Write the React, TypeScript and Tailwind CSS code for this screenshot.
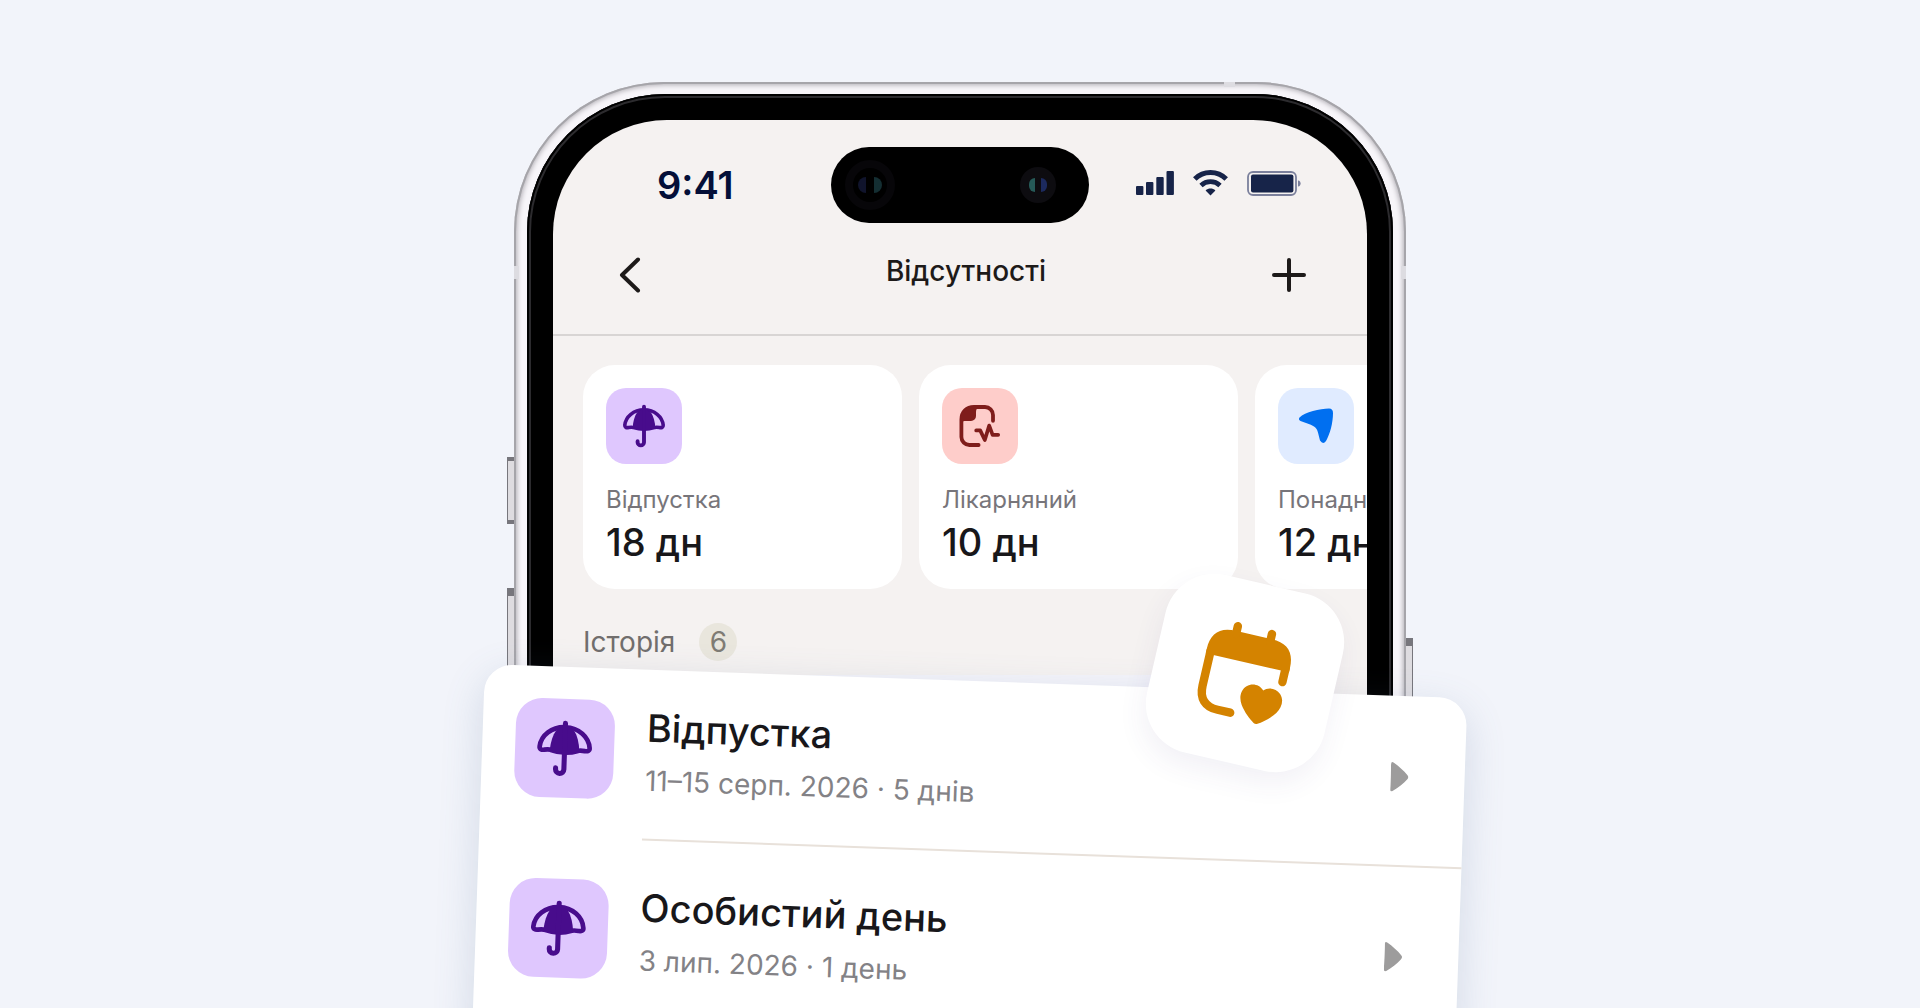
import React from 'react';

interface IconProps {
  className?: string;
}

const UmbrellaIcon: React.FC<IconProps> = ({ className }) => (
  <svg viewBox="0 0 76 76" className={className} fill="none" aria-hidden="true">
    <path
      d="M18.800 37.200C19.600 28.600 27.600 21.800 38 21.800s18.400 6.800 19.200 15.400c.2 2.200-1.600 2.600-3.400 2.400-2-.3-3.800-.6-5.400 0-6.400 2.100-14.400 2.100-20.800 0-1.600-.6-3.400-.3-5.400 0-1.800.2-3.600-.2-3.400-2.400z"
      stroke="#480c8c"
      strokeWidth="3.600"
      strokeLinejoin="round"
    />
    <path
      d="M31 24.500C28.600 28 27.200 33 26.600 39.600c6.500 2.600 16.300 2.600 22.800 0-.6-6.600-2-11.600-4.400-15.100L38 20z"
      fill="#480c8c"
    />
    <path
      d="M38 18.800V54.200a3.200 3.200 0 0 1-6.400 0v-1"
      stroke="#480c8c"
      strokeWidth="3.900"
      strokeLinecap="round"
      strokeLinejoin="round"
    />
  </svg>
);

const SickLeaveIcon: React.FC<IconProps> = ({ className }) => (
  <svg viewBox="0 0 76 76" className={className} fill="none" aria-hidden="true">
    <path
      d="M51 32.800V27a8 8 0 0 0-8-8H32C24.500 19 19.400 24 19.400 31.500V49a8 8 0 0 0 8 8h9.200"
      stroke="#7f1d1b"
      strokeWidth="3.800"
      strokeLinecap="round"
    />
    <path
      d="M18.600 35V31C18.600 23.500 24 18 32 18h6c-3 1.800-4 3.500-4 6v4a5 5 0 0 1-5 5h-5c-2.500 0-4 .6-5.400 2z"
      fill="#7f1d1b"
    />
    <path
      d="M34.200 42.400h4l4.600 9.600 4.400-14.400 3.400 9.200h5.600"
      stroke="#7f1d1b"
      strokeWidth="3.700"
      strokeLinecap="round"
      strokeLinejoin="round"
    />
  </svg>
);

const ArrowIcon: React.FC<IconProps> = ({ className }) => (
  <svg viewBox="0 0 76 76" className={className} aria-hidden="true">
    <path
      d="M21.500 29.500C27 24 42 20.500 51 20.500q4 0 4 4.500c0 10-3 21-7 28q-3 4-6-.5C40 45 40 41 36 38.500 32 36 27 35 22.500 33q-2.500-1.500-1-3.500z"
      fill="#006ff0"
    />
  </svg>
);

const CalendarHeartIcon: React.FC<IconProps> = ({ className }) => (
  <svg viewBox="-50 -50 100 100" className={className} fill="none" aria-hidden="true">
    <path
      d="M-38.500-14v36c0 13 7 20 20 20h13"
      stroke="#d48300"
      strokeWidth="8.400"
      strokeLinecap="round"
    />
    <path d="M38.500-14V.5" stroke="#d48300" strokeWidth="8.400" strokeLinecap="round" />
    <path d="M-42.700-10.500V-15c0-16 8-24 24-24h37.400c16 0 24 8 24 24v4.500z" fill="#d48300" />
    <path d="M-17.500-44v8M17.500-44v8" stroke="#d48300" strokeWidth="8.400" strokeLinecap="round" />
    <path
      d="M21.600 13C17 8 9.500 8 4.500 12.500-1 18 0 26 4 32c4.500 6.500 11 12 15.600 14.700q2 1.200 4 0C28 44 35 38.500 39.500 32c4-6 5-14-.6-19.500C34 8 26 8 21.600 13z"
      fill="#d48300"
    />
  </svg>
);

const SignalIcon = () => (
  <svg width="38" height="24" viewBox="0 0 38 24" fill="#172449" aria-hidden="true">
    <rect x="0" y="15" width="7.400" height="9" rx="1" />
    <rect x="10" y="11" width="7.400" height="13" rx="1" />
    <rect x="20.300" y="6" width="7.400" height="18" rx="1" />
    <rect x="30.500" y="0" width="7.400" height="24" rx="1" />
  </svg>
);

const WifiIcon = () => (
  <svg width="35" height="26" viewBox="0 0 35 26" fill="none" stroke="#172449" aria-hidden="true">
    <path d="M1.800 9C10.500.4 24.500.4 33.200 9" strokeWidth="5" />
    <path d="M8 15.400c5.400-5 13.600-5 19 0" strokeWidth="4.800" />
    <path d="M12.600 20.400c2.800-2.600 7-2.600 9.800 0L17.500 25.600z" fill="#172449" stroke="none" />
  </svg>
);

const BatteryIcon = () => (
  <svg width="54" height="25" viewBox="0 0 54 25" fill="none" aria-hidden="true">
    <rect x="1" y="1" width="48" height="23" rx="5" stroke="#7b809c" strokeWidth="1.800" />
    <rect x="4" y="3.600" width="42.400" height="17.800" rx="2" fill="#172449" />
    <path d="M51 9.500c3.500 0 3.500 6 0 6z" fill="#7b809c" />
  </svg>
);

interface Balance {
  label: string;
  value: string;
  tile: string;
  Icon: React.FC<IconProps>;
}

const balances: Balance[] = [
  { label: 'Відпустка', value: '18 дн', tile: 'bg-[#dfc7fe]', Icon: UmbrellaIcon },
  { label: 'Лікарняний', value: '10 дн', tile: 'bg-[#fecdca]', Icon: SickLeaveIcon },
  { label: 'Понаднормові', value: '12 дн', tile: 'bg-[#e0ebff]', Icon: ArrowIcon },
];

const history = [
  { title: 'Відпустка', details: '11–15 серп. 2026 · 5 днів' },
  { title: 'Особистий день', details: '3 лип. 2026 · 1 день' },
];

const StatusBar = () => (
  <div className="grid h-[76px] grid-cols-[1fr_258px_1fr] items-center">
    <span className="pl-[104px] text-[38px] leading-[48px] font-semibold text-[#040f38]">9:41</span>
    <div className="flex h-full items-center justify-between rounded-full bg-black pr-[33px] pl-[14px]">
      <span className="flex size-[50px] items-center justify-center gap-2 rounded-full border-8 border-[#070609]">
        <span className="h-4 w-2 rounded-l-full bg-[#10142c]" />
        <span className="h-4 w-2 rounded-r-full bg-[#142e32]" />
      </span>
      <span className="flex size-9 items-center justify-center gap-1.5 rounded-full bg-[#0d0c10]">
        <span className="h-3.5 w-1.5 rounded-l-full bg-[#265a58]" />
        <span className="h-3.5 w-1.5 rounded-r-full bg-[#1c2a5e]" />
      </span>
    </div>
    <div className="flex items-center justify-end gap-[19px] pr-[66px] pb-1">
      <SignalIcon />
      <WifiIcon />
      <BatteryIcon />
    </div>
  </div>
);

const ScreenHeader = () => (
  <header className="flex h-[113px] items-center justify-between border-b-2 border-[#d8d5d4] pr-[61px] pb-2 pl-[59px]">
    <button type="button" aria-label="Назад" className="flex h-12 w-12 items-center pl-[7px]">
      <svg width="22" height="36" viewBox="0 0 22 36" fill="none" aria-hidden="true">
        <path
          d="M19 2.500L3 18l16 15.500"
          stroke="#1d1a19"
          strokeWidth="4"
          strokeLinecap="round"
          strokeLinejoin="round"
        />
      </svg>
    </button>
    <h1 className="pb-2 text-[28px] leading-9 font-medium text-[#1d1a19]">Відсутності</h1>
    <button type="button" aria-label="Додати">
      <svg width="34" height="34" viewBox="0 0 34 34" fill="none" aria-hidden="true">
        <path d="M17 2v30M2 17h30" stroke="#1d1a19" strokeWidth="4" strokeLinecap="round" />
      </svg>
    </button>
  </header>
);

const BalanceCard: React.FC<Balance> = ({ label, value, tile, Icon }) => (
  <article className="w-[319px] shrink-0 rounded-[32px] bg-white p-[23px]">
    <div className={`size-[76px] rounded-[20px] ${tile}`}>
      <Icon className="size-full" />
    </div>
    <p className="mt-[22px] text-2xl leading-7 text-[#77757a]">{label}</p>
    <p className="mt-1 text-[38px] leading-[48px] font-medium text-[#18171a]">{value}</p>
  </article>
);

const HistoryCard = () => (
  <ul className="absolute top-[582px] -left-[29px] h-[480px] w-[983px] origin-top-left rotate-2 rounded-[28px] bg-white pt-8 pl-[33px] shadow-[0_12px_40px_rgba(80,110,150,0.2)]">
    {history.map((item, i) => (
      <li key={item.title} className={i > 0 ? 'flex items-start gap-[31px] pt-[41px]' : 'flex items-start gap-[31px]'}>
        <div className="size-[99px] shrink-0 rounded-[26px] bg-[#dfc7fe]">
          <UmbrellaIcon className="size-full" />
        </div>
        <div
          className={
            i < history.length - 1
              ? 'flex h-[139px] flex-1 items-start justify-between border-b-2 border-[#e8e1da] pr-14'
              : 'flex h-[139px] flex-1 items-start justify-between pr-14'
          }
        >
          <div className="pt-[2px] pl-px">
            <h2 className="text-[38px] leading-[48px] font-medium text-[#18171a]">{item.title}</h2>
            <p className="mt-[11px] text-[28px] leading-9 text-[#838286]">{item.details}</p>
          </div>
          <button type="button" aria-label="Докладніше" className="flex h-[98px] items-center">
            <svg width="18" height="30" viewBox="0 0 18 30" aria-hidden="true">
              <path d="M0 2.500Q0-.8 2.800 1C8 4.500 13 8.500 16.800 13q1.800 2 0 4C13 21.500 8 25.500 2.800 29Q0 30.800 0 27.500z" fill="#9d9c9c" />
            </svg>
          </button>
        </div>
      </li>
    ))}
  </ul>
);

const FloatingBadge = () => (
  <div className="absolute top-[500px] left-[640px] flex size-[182px] rotate-[13deg] items-center justify-center rounded-[50px] bg-white shadow-[0_12px_28px_rgba(70,60,130,0.07)]">
    <CalendarHeartIcon className="size-[100px]" />
  </div>
);

const Phone = () => (
  <div className="relative w-[892px] shrink-0">
    {/* side buttons */}
    <span className="absolute top-[375px] -left-[7px] h-[67px] w-[9px] border-y-4 border-l border-[#77767c] bg-[#dedce0]" />
    <span className="absolute top-[506px] -left-[7px] h-[140px] w-[9px] border-t-8 border-l border-[#77767c] bg-[#dedce0]" />
    <span className="absolute top-[556px] -right-[7px] h-[140px] w-[9px] border-t-8 border-r border-[#77767c] bg-[#dedce0]" />

    <div className="relative rounded-t-[150px] bg-[#f7f5f9] px-[13px] pt-3 shadow-[inset_0_0_0_2px_#a6a5aa,inset_0_0_5px_3px_#b0adb3]">
      {/* antenna bands */}
      <span className="absolute top-0 right-[171px] h-[5px] w-[11px] bg-[#dddce1]" />
      <span className="absolute top-[184px] left-0 h-[13px] w-[5px] bg-[#dddce1]" />
      <span className="absolute top-[184px] right-0 h-[13px] w-[5px] bg-[#dddce1]" />

      <div className="rounded-t-[138px] bg-black px-[26px] pt-[26px] shadow-[inset_0_0_0_2px_#000,inset_0_0_0_4px_#2c2b2e]">
        <div className="overflow-hidden rounded-t-[114px] bg-[#f5f2f1] pt-[27px] pb-[400px]">
          <StatusBar />
          <ScreenHeader />
          <section className="flex gap-[17px] pt-[29px] pl-[30px]">
            {balances.map((balance) => (
              <BalanceCard key={balance.label} {...balance} />
            ))}
          </section>
          <div className="mt-[34px] flex items-center gap-6 pl-[30px]">
            <h2 className="text-[28px] leading-[38px] text-[#716e6d]">Історія</h2>
            <span className="flex size-[38px] items-center justify-center rounded-full bg-[#e9e6dd] text-[28px] leading-[38px] text-[#7f7c74]">
              6
            </span>
          </div>
          <div className="mt-[14px] mr-[45px] ml-[30px] h-20 rounded-t-[28px] bg-[#f4f4fa]" />
        </div>
      </div>
    </div>

    <HistoryCard />
    <FloatingBadge />
  </div>
);

export default function App() {
  return (
    <main className="flex h-screen justify-center overflow-hidden bg-[#f2f4fa] pt-[82px] font-[Inter,'Noto_Sans',sans-serif]">
      <Phone />
    </main>
  );
}
